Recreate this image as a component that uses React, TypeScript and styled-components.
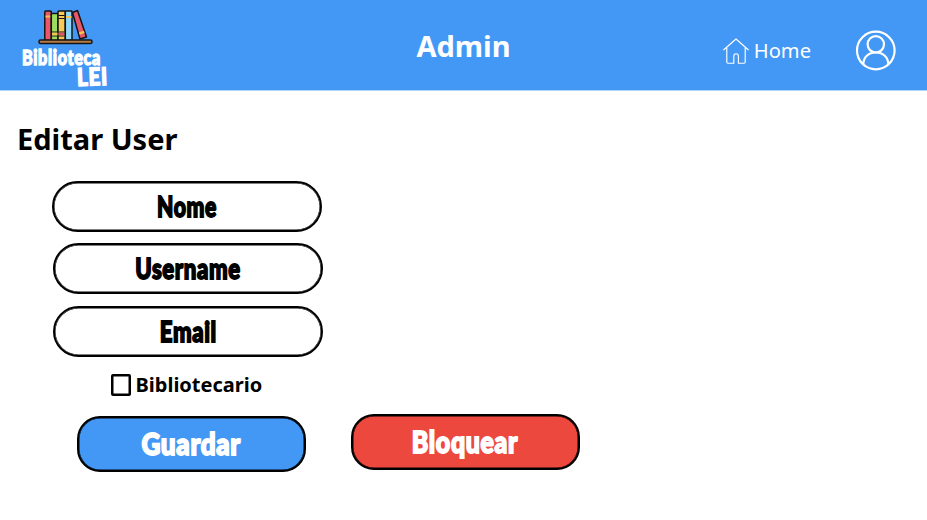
import React from "react";
import styled, { createGlobalStyle } from "styled-components";

const GlobalStyle = createGlobalStyle`
  *, *::before, *::after { box-sizing: border-box; }
  body { margin: 0; background: #fff; }
  button { font: inherit; padding: 0; }
`;

const Page = styled.div`
  height: 520px;
  overflow: hidden;
  color: #000;
  font-family: "Noto Sans", sans-serif;
`;

const Header = styled.header`
  height: 91px;
  display: grid;
  grid-template-columns: 1fr auto 1fr;
  background: #4398f6;
  border-bottom: 1px solid #b4d6fb;
  color: #fff;
`;

const Brand = styled.div`
  width: 98px;
  margin-left: 20px;
  padding-top: 9px;
`;

const Books = styled.svg`
  display: block;
  width: 56px;
  height: 37px;
  margin-left: 18px;
`;

const BrandLine = styled.div<{ $height: number; $indent: number }>`
  display: flex;
  align-items: center;
  height: ${(p) => p.$height}px;
  margin-left: ${(p) => p.$indent}px;
`;

const Lettering = styled.span<{ $size: number; $stretch: number; $stroke?: number; $tilt?: number }>`
  display: inline-block;
  padding-bottom: 3px;
  font-family: Lato, sans-serif;
  font-weight: 900;
  font-size: ${(p) => p.$size}px;
  line-height: 1;
  letter-spacing: 0.8px;
  white-space: nowrap;
  -webkit-text-stroke: ${(p) => p.$stroke ?? 1.8}px currentColor;
  transform: rotate(${(p) => p.$tilt ?? 0}deg) scaleX(${(p) => p.$stretch});
`;

const BrandLettering = styled(Lettering)`
  padding-bottom: 0;
  transform-origin: left center;
`;

const Title = styled.h1`
  margin: 26px 0 0;
  font-size: 29px;
  line-height: 40px;
  font-weight: 700;
`;

const Nav = styled.nav`
  display: flex;
  justify-content: flex-end;
  align-items: center;
  height: 101px;
  padding-right: 31px;
`;

const HomeLink = styled.a`
  display: flex;
  align-items: center;
  gap: 4.5px;
  margin-right: 44px;
  font-size: 20.1px;
  line-height: 28px;
`;

const Icon = styled.svg`
  display: block;
  fill: none;
  stroke: #fff;
  stroke-linejoin: round;
  stroke-linecap: round;
`;

const Heading = styled.h2`
  margin: 28px 0 22px 17px;
  font-size: 29px;
  line-height: 40px;
  font-weight: 700;
`;

const Form = styled.form`
  display: flex;
  flex-direction: column;
`;

const Field = styled.div<{ $left: number; $gap: number }>`
  display: flex;
  align-items: center;
  justify-content: center;
  width: 270px;
  height: 51px;
  margin: 0 0 ${(p) => p.$gap}px ${(p) => p.$left}px;
  border: 2px solid #000;
  border-radius: 26px;
  box-shadow: inset 0 0 0 0.5px #000;
`;

const CheckRow = styled.label`
  display: flex;
  align-items: center;
  gap: 5px;
  height: 22px;
  margin-left: 111px;
  font-size: 20px;
  font-weight: 700;
  line-height: 22px;
`;

const Box = styled.span`
  width: 19.5px;
  height: 22px;
  border: 2px solid #000;
  border-radius: 2px;
  box-shadow: inset 0 0 0 0.5px #000;
`;

const Actions = styled.div`
  display: flex;
  align-items: flex-start;
  gap: 44.5px;
  margin: 18px 0 0 76.5px;
`;

const Action = styled.button<{ $color: string; $drop?: number }>`
  display: flex;
  align-items: center;
  justify-content: center;
  width: 229.5px;
  height: 56px;
  margin-top: ${(p) => p.$drop ?? 0}px;
  border: 2px solid #000;
  border-radius: 23px;
  box-shadow: inset 0 0 0 0.5px #000;
  background: ${(p) => p.$color};
  color: #fff;
`;

const BookShelf = () => (
  <Books viewBox="0 0 56 37" stroke="#141414" strokeWidth="1.5" strokeLinejoin="round">
    <rect x="6.8" y="2" width="6.5" height="29.5" rx=".8" fill="#e9576b" />
    <path d="M7.5 7.5h5" stroke="#f4c34f" strokeWidth="2" />
    <rect x="13.3" y="4.5" width="6.7" height="27" rx=".8" fill="#9ddd5e" />
    <rect x="20" y="2" width="7.3" height="29.5" rx=".8" fill="#fbc955" />
    <path d="M20.5 6.5h6M20.5 9.5h6M20.5 23h6M20.5 27h6" strokeWidth="1" />
    <path d="M20.7 25h6" stroke="#df566b" strokeWidth="2.5" />
    <path d="M14 23h5.5M14 27h5.5" strokeWidth="1" />
    <path d="M14 25h5.5" stroke="#f4c34f" strokeWidth="2.5" />
    <rect x="27.3" y="2" width="6.7" height="29.5" rx=".8" fill="#8ed7fb" />
    <path d="M28 8h5.5" stroke="#f4c34f" strokeWidth="2" />
    <path d="M34.5 3.5l5-2 9 26.5-6.5 2z" fill="#e9576b" />
    <path d="M41.3 24.5l5-1.6" stroke="#f4c34f" strokeWidth="2.5" />
    <rect x="1" y="31" width="53" height="3.5" rx="1.6" fill="#b67b45" />
  </Books>
);

const fields = [
  { label: "Nome", left: 51.5, gap: 11, stretch: 0.73 },
  { label: "Username", left: 53, gap: 12, stretch: 0.765 },
  { label: "Email", left: 53, gap: 17, stretch: 0.765 },
];

export default function App() {
  return (
    <Page>
      <GlobalStyle />
      <Header>
        <Brand>
          <BookShelf />
          <BrandLine $height={22} $indent={2}>
            <BrandLettering $size={20} $stretch={0.81} $stroke={1.3}>Biblioteca</BrandLettering>
          </BrandLine>
          <BrandLine $height={18} $indent={57}>
            <BrandLettering $size={24.5} $stretch={0.84} $stroke={1.4} $tilt={-2}>LEI</BrandLettering>
          </BrandLine>
        </Brand>
        <Title>Admin</Title>
        <Nav>
          <HomeLink>
            <Icon width="26" height="26" viewBox="0 0 26 26" strokeWidth="1.15">
              <path d="M.8 11.8L13 1l12.2 10.8M3.8 10v14q0 1.2 1.2 1.2h5.8v-7q0-2.5 2.3-2.5t2.3 2.5v7h5.6q1.2 0 1.2-1.2V10" />
            </Icon>
            Home
          </HomeLink>
          <Icon width="41" height="41" viewBox="0 0 41 41" strokeWidth="2.2">
            <circle cx="20.8" cy="20.5" r="18.8" />
            <circle cx="20.8" cy="14.3" r="8.2" />
            <path d="M8.3 34.5c0-7.5 5.2-12 12.5-12s12.5 4.5 12.5 12" />
          </Icon>
        </Nav>
      </Header>
      <Heading>Editar User</Heading>
      <Form>
        {fields.map((f) => (
          <Field key={f.label} $left={f.left} $gap={f.gap}>
            <Lettering $size={29} $stretch={f.stretch}>{f.label}</Lettering>
          </Field>
        ))}
        <CheckRow>
          <Box />
          Bibliotecario
        </CheckRow>
        <Actions>
          <Action type="button" $color="#4398f6" $drop={2}>
            <Lettering $size={30} $stretch={0.87}>Guardar</Lettering>
          </Action>
          <Action type="button" $color="#ed483e">
            <Lettering $size={30} $stretch={0.83}>Bloquear</Lettering>
          </Action>
        </Actions>
      </Form>
    </Page>
  );
}
